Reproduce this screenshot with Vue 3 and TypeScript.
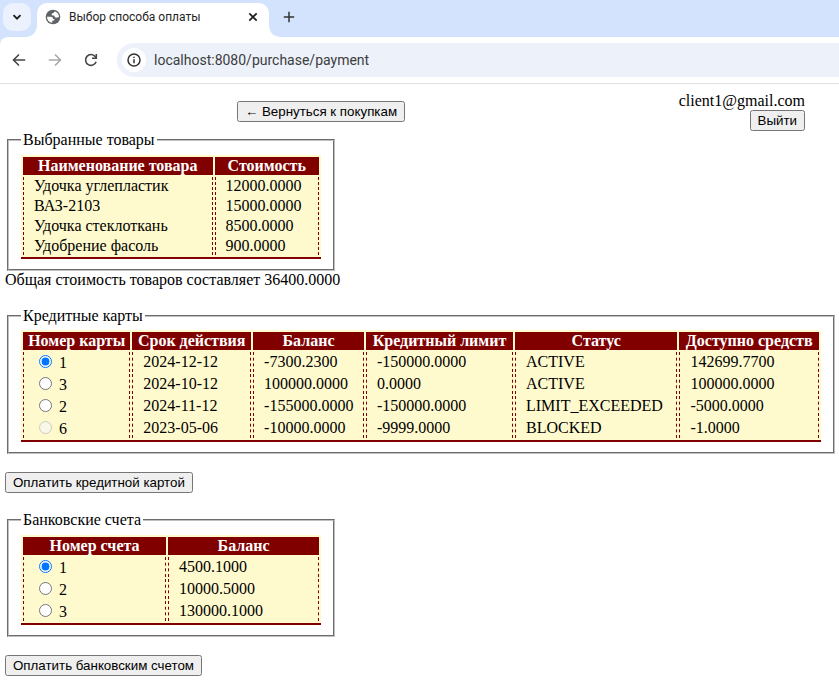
<script setup lang="ts">
import { ref } from 'vue'

interface Product {
  name: string
  price: string
}

interface CreditCard {
  id: number
  expires: string
  balance: string
  limit: string
  status: string
  available: string
}

interface Account {
  id: number
  balance: string
}

const url = ref('localhost:8080/purchase/payment')

const products: Product[] = [
  { name: 'Удочка углепластик', price: '12000.0000' },
  { name: 'ВАЗ-2103', price: '15000.0000' },
  { name: 'Удочка стеклоткань', price: '8500.0000' },
  { name: 'Удобрение фасоль', price: '900.0000' },
]

const cards: CreditCard[] = [
  { id: 1, expires: '2024-12-12', balance: '-7300.2300', limit: '-150000.0000', status: 'ACTIVE', available: '142699.7700' },
  { id: 3, expires: '2024-10-12', balance: '100000.0000', limit: '0.0000', status: 'ACTIVE', available: '100000.0000' },
  { id: 2, expires: '2024-11-12', balance: '-155000.0000', limit: '-150000.0000', status: 'LIMIT_EXCEEDED', available: '-5000.0000' },
  { id: 6, expires: '2023-05-06', balance: '-10000.0000', limit: '-9999.0000', status: 'BLOCKED', available: '-1.0000' },
]

const accounts: Account[] = [
  { id: 1, balance: '4500.1000' },
  { id: 2, balance: '10000.5000' },
  { id: 3, balance: '130000.1000' },
]

const selectedCard = ref(1)
const selectedAccount = ref(1)
</script>

<template>
  <div class="browser">
    <div class="tab-strip">
      <button class="tab-search" type="button" aria-label="Поиск вкладок">
        <svg width="10" height="10" viewBox="0 0 10 10"><path d="M1.5 3.2 5 6.7 8.5 3.2" fill="none" stroke="#1f1f1f" stroke-width="1.9" /></svg>
      </button>
      <div class="tab">
        <svg class="favicon" width="16" height="16" viewBox="0 0 16 16">
          <circle cx="8" cy="8" r="7.3" fill="#5f6368" />
          <path d="M2 7.800H5.500C7.300 7.800 8 8.700 8 10H9.300V11.400H7.300V13.800C4.300 13.500 2 11.100 2 7.800Z" fill="#fff" />
          <path d="M10.200 2.500C8.800 2.700 9.100 4 7.700 4.200 6.300 4.500 6.200 6.400 7.800 6.500H9.300C9.600 8.300 10.700 9 12 8.600L13.900 8.200C14.200 5.700 12.600 3.300 10.200 2.500Z" fill="#fff" />
        </svg>
        <span class="tab-title">Выбор способа оплаты</span>
        <button class="icon-button" type="button" aria-label="Закрыть вкладку">
          <svg width="10" height="10" viewBox="0 0 10 10"><path d="M1.300 1.300 8.700 8.700M8.700 1.300 1.300 8.700" stroke="#1f1f1f" stroke-width="1.700" /></svg>
        </button>
      </div>
      <button class="icon-button new-tab" type="button" aria-label="Новая вкладка">
        <svg width="12" height="12" viewBox="0 0 12 12"><path d="M6 .8V11.200M.8 6H11.200" stroke="#333" stroke-width="1.500" /></svg>
      </button>
    </div>
    <div class="toolbar">
      <div class="nav">
        <button class="icon-button" type="button" aria-label="Назад">
          <svg width="14" height="14" viewBox="0 0 14 14"><path d="M13.200 7H1.800M7 1.500 1.500 7 7 12.500" fill="none" stroke="#474747" stroke-width="1.600" /></svg>
        </button>
        <button class="icon-button" type="button" aria-label="Вперёд" disabled>
          <svg width="14" height="14" viewBox="0 0 14 14"><path d="M.8 7H12.200M7 1.500 12.500 7 7 12.500" fill="none" stroke="#a9a9a9" stroke-width="1.600" /></svg>
        </button>
        <button class="icon-button" type="button" aria-label="Обновить">
          <svg width="14" height="14" viewBox="0 0 14 14"><path d="M12.100 8.700A5.400 5.400 0 1 1 11.300 3.700L12.100 4.700" fill="none" stroke="#474747" stroke-width="1.600" /><path d="M12.300 1V5.300H8" fill="none" stroke="#474747" stroke-width="1.600" /></svg>
        </button>
      </div>
      <div class="omnibox">
        <button class="site-info" type="button" aria-label="Сведения о сайте">
          <svg width="14" height="14" viewBox="0 0 14 14"><circle cx="7" cy="7" r="6" fill="none" stroke="#333" stroke-width="1.500" /><path d="M7 6.200V10.200M7 3.700V5.100" stroke="#333" stroke-width="1.500" /></svg>
        </button>
        <input v-model="url" class="url" type="text" aria-label="Адресная строка" spellcheck="false" />
      </div>
    </div>
  </div>

  <main class="page">
    <header class="page-header">
      <div class="back"><button class="action" type="button">← Вернуться к покупкам</button></div>
      <div class="user">
        <span>client1@gmail.com</span>
        <button class="action" type="button">Выйти</button>
      </div>
    </header>

    <fieldset class="narrow">
      <legend>Выбранные товары</legend>
      <table>
        <thead>
          <tr><th>Наименование товара</th><th>Стоимость</th></tr>
        </thead>
        <tbody>
          <tr v-for="product in products" :key="product.name">
            <td>{{ product.name }}</td>
            <td>{{ product.price }}</td>
          </tr>
        </tbody>
      </table>
    </fieldset>
    <p class="total">Общая стоимость товаров составляет 36400.0000</p>

    <form class="payment" @submit.prevent>
      <fieldset>
        <legend>Кредитные карты</legend>
        <table>
          <thead>
            <tr>
              <th>Номер карты</th><th>Срок действия</th><th>Баланс</th>
              <th>Кредитный лимит</th><th>Статус</th><th>Доступно средств</th>
            </tr>
          </thead>
          <tbody>
            <tr v-for="card in cards" :key="card.id">
              <td><label><input v-model="selectedCard" type="radio" name="card" :value="card.id" :disabled="card.status === 'BLOCKED'" /> {{ card.id }}</label></td>
              <td>{{ card.expires }}</td>
              <td>{{ card.balance }}</td>
              <td>{{ card.limit }}</td>
              <td>{{ card.status }}</td>
              <td>{{ card.available }}</td>
            </tr>
          </tbody>
        </table>
      </fieldset>
      <button class="action" type="submit">Оплатить кредитной картой</button>
    </form>

    <form class="payment" @submit.prevent>
      <fieldset class="narrow">
        <legend>Банковские счета</legend>
        <table>
          <thead>
            <tr><th>Номер счета</th><th>Баланс</th></tr>
          </thead>
          <tbody>
            <tr v-for="account in accounts" :key="account.id">
              <td><label><input v-model="selectedAccount" type="radio" name="account" :value="account.id" /> {{ account.id }}</label></td>
              <td>{{ account.balance }}</td>
            </tr>
          </tbody>
        </table>
      </fieldset>
      <button class="action" type="submit">Оплатить банковским счетом</button>
    </form>
  </main>
</template>

<style>
body {
  margin: 0;
  background: #fff;
}
</style>

<style scoped>
.browser {
  font-family: Roboto, "Open Sans", sans-serif;
  background: #d3e3fd;
}

.icon-button,
.tab-search,
.site-info {
  display: flex;
  align-items: center;
  justify-content: center;
  flex: none;
  padding: 0;
  border: 0;
  background: transparent;
}

.icon-button {
  width: 20px;
  height: 20px;
}

.tab-strip {
  display: flex;
  padding: 3px 3px 0;
}

.tab-search {
  width: 28px;
  height: 28px;
  border-radius: 10px;
  background: #ebf2fe;
}

.tab {
  position: relative;
  display: flex;
  align-items: center;
  box-sizing: border-box;
  flex: 0 1 232px;
  height: 34px;
  margin-left: 6px;
  padding: 0 6px 6px 8px;
  border-radius: 10px 10px 0 0;
  background: #fff;
}

/* Curved feet joining the active tab to the toolbar */
.tab::before,
.tab::after {
  content: "";
  position: absolute;
  bottom: 0;
  width: 10px;
  height: 10px;
}

.tab::before {
  right: 100%;
  background: radial-gradient(circle at 0 0, transparent 9px, #fff 10px);
}

.tab::after {
  left: 100%;
  background: radial-gradient(circle at 100% 0, transparent 9px, #fff 10px);
}

.favicon {
  flex: none;
}

.tab-title {
  flex: 1;
  margin-left: 8px;
  overflow: hidden;
  font-size: 12px;
  line-height: 16px;
  white-space: nowrap;
  color: #1f1f1f;
}

.new-tab {
  margin: 4px 0 0 10px;
}

.toolbar {
  display: flex;
  align-items: center;
  padding: 6px 0;
  border-bottom: 1px solid #dfe1e5;
  border-radius: 8px 0 0 0;
  background: #fff;
}

.nav {
  display: flex;
  gap: 16px;
  padding: 0 16px 0 9px;
}

.omnibox {
  display: flex;
  align-items: center;
  flex: 1;
  gap: 8px;
  height: 34px;
  padding-left: 5px;
  border-radius: 17px 0 0 17px;
  background: #ecf1fa;
}

.site-info {
  width: 24px;
  height: 24px;
  border-radius: 50%;
  background: #fff;
}

.url {
  flex: 1;
  min-width: 0;
  padding: 0;
  border: 0;
  outline: 0;
  background: transparent;
  font-family: inherit;
  font-size: 14px;
  line-height: 20px;
  color: #3c3c3c;
}

.page {
  padding: 8px 2px 6px 5px;
  font-family: "Liberation Serif", "Times New Roman", serif;
  font-size: 16px;
  color: #000;
}

.page-header {
  display: grid;
  grid-template-columns: 79fr 21fr;
  align-items: center;
  padding-right: 32px;
}

.back {
  display: flex;
  justify-content: center;
}

.user {
  display: flex;
  flex-direction: column;
  align-items: flex-end;
}

.action {
  display: block;
  padding: 1px 6px;
  height: 21px;
  font-family: "Liberation Sans", Arial, sans-serif;
}

fieldset {
  border: 2px groove #c0c0c0;
}

fieldset.narrow {
  width: 300px;
}

.total {
  margin: 0;
}

.payment {
  display: flex;
  flex-direction: column;
  align-items: flex-start;
  gap: 18px;
  margin-top: 18px;
}

.payment fieldset:not(.narrow) {
  align-self: stretch;
}

table {
  width: 100%;
  border-spacing: 2px;
  border-bottom: 2px solid maroon;
  background: #fffacd;
}

th {
  padding: 0 1px;
  background: maroon;
  color: #fff;
}

td {
  padding: 0 1px 0 10px;
  border-right: 1px dashed maroon;
  border-left: 1px dashed maroon;
}
</style>
